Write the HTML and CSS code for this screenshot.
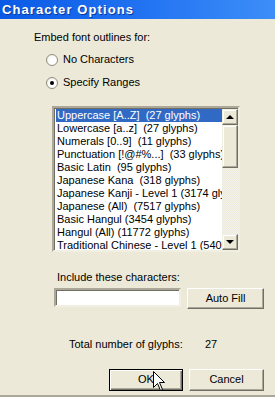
FILE: index.html
```html
<!DOCTYPE html>
<html lang="en">
<head>
    <meta charset="UTF-8">
    <title>Character Options</title>
    <link rel="stylesheet" href="styles.css">
</head>
<body>
    <div class="dialog">
        <div class="titlebar">Character Options</div>

        <div class="content">
            <div class="legend">Embed font outlines for:</div>

            <div class="radio-row first">
                <span class="radio"></span>
                <span>No Characters</span>
            </div>
            <div class="radio-row">
                <span class="radio checked"></span>
                <span>Specify Ranges</span>
            </div>

            <div class="listbox">
                <div class="items">
                    <div class="item selected">Uppercase [A..Z]&nbsp; (27 glyphs)</div>
                    <div class="item">Lowercase [a..z]&nbsp; (27 glyphs)</div>
                    <div class="item">Numerals [0..9]&nbsp; (11 glyphs)</div>
                    <div class="item">Punctuation [!@#%...]&nbsp; (33 glyphs)</div>
                    <div class="item">Basic Latin&nbsp; (95 glyphs)</div>
                    <div class="item">Japanese Kana&nbsp; (318 glyphs)</div>
                    <div class="item">Japanese Kanji - Level 1 (3174 glyphs)</div>
                    <div class="item">Japanese (All)&nbsp; (7517 glyphs)</div>
                    <div class="item">Basic Hangul (3454 glyphs)</div>
                    <div class="item">Hangul (All) (11772 glyphs)</div>
                    <div class="item">Traditional Chinese - Level 1 (5400 glyphs)</div>
                </div>
                <div class="scrollbar">
                    <div class="sb-btn"><span class="arrow up"></span></div>
                    <div class="sb-thumb"></div>
                    <div class="sb-track"></div>
                    <div class="sb-btn"><span class="arrow down"></span></div>
                </div>
            </div>

            <div class="include-label">Include these characters:</div>
            <div class="include-row">
                <div class="textbox"></div>
                <div class="button autofill">Auto Fill</div>
            </div>

            <div class="total-row">
                <span class="total-label">Total number of glyphs:</span>
                <span class="total-value">27</span>
            </div>

            <div class="button-row">
                <div class="button ok">OK</div>
                <div class="button cancel">Cancel</div>
            </div>
        </div>

        <!-- mouse pointer over the OK button -->
        <svg class="cursor" width="13" height="21" viewBox="0 0 13 21">
            <path d="M0.5 0.5 L0.5 16.5 L4.5 12.5 L7.5 19.5 L9.5 18.5 L6.5 11.5 L11.5 11.5 Z" fill="#fff" stroke="#000" stroke-width="1"/>
        </svg>
    </div>
</body>
</html>
```

FILE: styles.css
```css
* {
    margin: 0;
    padding: 0;
    box-sizing: border-box;
}

body {
    background: #ece9d8;
    font-family: 'Liberation Sans', Arial, sans-serif;
    font-size: 11px;
    color: #000;
}

.dialog {
    position: relative;
    width: 275px;
    height: 397px;
    background: #ece9d8;
    border-bottom: 2px solid #aca899;
    overflow: hidden;
}

.titlebar {
    height: 19px;
    line-height: 19px;
    padding-left: 2px;
    color: #fff;
    font-family: 'Liberation Sans', sans-serif;
    font-weight: bold;
    font-size: 13px;
    letter-spacing: 1.1px;
    background: linear-gradient(to right, #0a5ae6 0%, #1e6ff0 45%, #3d8ef8 100%);
    text-shadow: 1px 1px 0 #0a3a9c;
}

.content {
    padding-left: 34px;
}

.legend {
    margin-top: 12px;
    line-height: 13px;
}

.radio-row {
    display: flex;
    align-items: center;
    gap: 5px;
    height: 13px;
    margin-top: 10px;
    padding-left: 12px;
    line-height: 13px;
}

.radio-row.first {
    margin-top: 9px;
}

.radio {
    width: 12px;
    height: 12px;
    border-radius: 50%;
    border: 1px solid #8f8d81;
    background: radial-gradient(circle at 60% 60%, #fff 40%, #e6e4d8 100%);
    position: relative;
    flex-shrink: 0;
}

.radio.checked::after {
    content: '';
    position: absolute;
    left: 3px;
    top: 3px;
    width: 4px;
    height: 4px;
    border-radius: 50%;
    background: #000;
}

.listbox {
    display: flex;
    width: 188px;
    height: 146px;
    margin-top: 17px;
    margin-left: 18px;
    border: 2px solid;
    border-color: #aca899 #f1efe2 #f1efe2 #aca899;
    box-shadow: inset 1px 1px 0 #716f64;
    background: #fff;
}

.items {
    flex: 1;
    overflow: hidden;
    padding: 1px 0 0 2px;
}

.item {
    height: 13px;
    line-height: 13px;
    padding-left: 1px;
    white-space: nowrap;
}

.item.selected {
    background: #316ac5;
    color: #fff;
}

.scrollbar {
    width: 16px;
    display: flex;
    flex-direction: column;
    padding-top: 1px;
}

.sb-btn,
.sb-thumb {
    background: #ece9d8;
    border: 1px solid;
    border-color: #f1efe2 #716f64 #716f64 #f1efe2;
    box-shadow: inset -1px -1px 0 #aca899, inset 1px 1px 0 #fff;
}

.sb-btn {
    height: 16px;
    display: flex;
    align-items: center;
    justify-content: center;
}

.sb-thumb {
    height: 43px;
}

.sb-track {
    flex: 1;
    background: repeating-conic-gradient(#f4f3ee 0 25%, #ece9d8 0 50%) 0 0 / 2px 2px;
}

.arrow {
    width: 0;
    height: 0;
    border-left: 4px solid transparent;
    border-right: 4px solid transparent;
}

.arrow.up {
    border-bottom: 4px solid #000;
}

.arrow.down {
    border-top: 4px solid #000;
}

.include-label {
    margin-top: 19px;
    margin-left: 23px;
    line-height: 13px;
}

.include-row {
    display: flex;
    gap: 6px;
    margin-top: 4px;
    margin-left: 20px;
}

.textbox {
    width: 127px;
    height: 19px;
    background: #fff;
    border: 2px solid;
    border-color: #aca899 #f1efe2 #f1efe2 #aca899;
    box-shadow: inset 1px 1px 0 #716f64;
}

.button {
    height: 21px;
    line-height: 19px;
    text-align: center;
    background: #ece9d8;
    border: 1px solid;
    border-color: #fff #716f64 #716f64 #fff;
    box-shadow: inset -1px -1px 0 #aca899;
}

.autofill {
    width: 77px;
}

.total-row {
    display: flex;
    margin-top: 29px;
    margin-left: 35px;
    line-height: 13px;
}

.total-label {
    width: 136px;
}

.button-row {
    display: flex;
    gap: 6px;
    margin-top: 18px;
    margin-left: 75px;
}

.button.ok {
    width: 74px;
    height: 22px;
    border: 1px solid #000;
    box-shadow: inset 1px 1px 0 #fff, inset -1px -1px 0 #716f64, inset -2px -2px 0 #aca899;
}

.button.cancel {
    width: 75px;
    height: 22px;
}

.cursor {
    position: absolute;
    left: 153px;
    top: 371px;
}
```
